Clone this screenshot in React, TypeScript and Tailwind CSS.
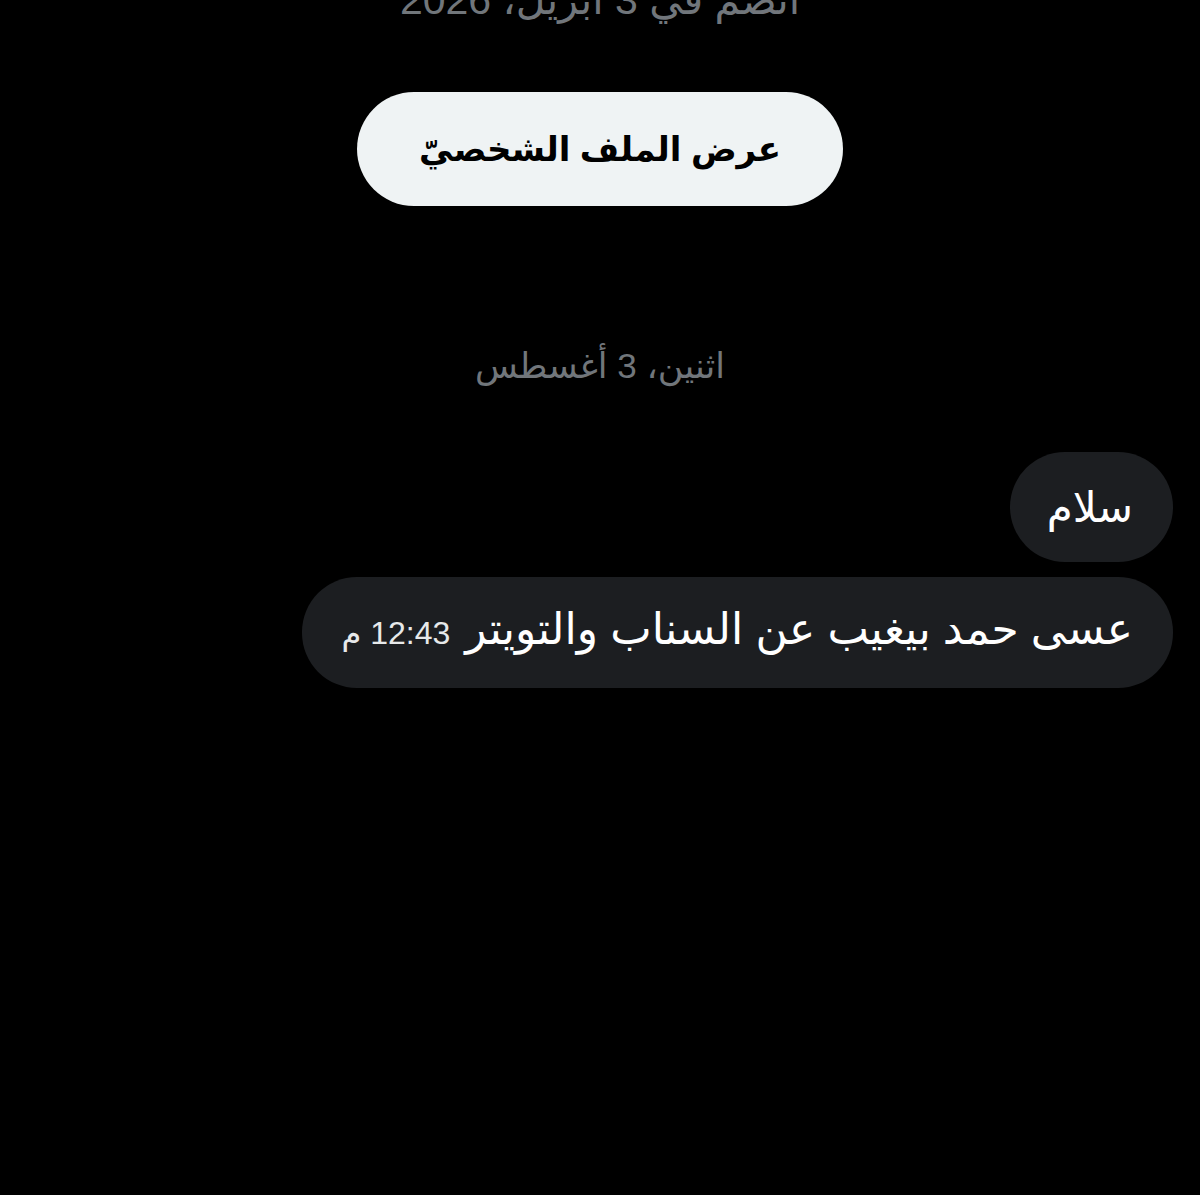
export default function App() {
  return (
    <div
      dir="rtl"
      className="w-[1200px] h-[1195px] overflow-hidden bg-black flex flex-col"
      style={{ fontFamily: '"Liberation Sans", "DejaVu Sans", sans-serif' }}
    >
      {/* تاريخ الانضمام (مقصوص من الأعلى) */}
      <div className="mt-[-25px] h-[50px] flex justify-center items-center text-[41px] leading-[50px] text-[#71767b]">
        انضم في 3 أبريل، 2026
      </div>

      <div className="mt-[67px] flex justify-center">
        <button className="w-[486px] h-[114px] rounded-full bg-[#eff3f4] text-black text-[34px] font-bold">
          عرض الملف الشخصيّ
        </button>
      </div>

      <div className="mt-[138px] flex justify-center text-[35px] leading-[44px] text-[#71767b]">
        اثنين، 3 أغسطس
      </div>

      {/* الرسائل */}
      <div className="mt-[64px] flex flex-col items-start gap-[15px] pr-[27px]">
        <div className="h-[110px] pr-[40px] pl-[37px] rounded-[55px] bg-[#1c1e21] flex items-center text-white text-[42px]">
          سلام
        </div>
        <div className="h-[111px] px-[40px] rounded-[55px] bg-[#1c1e21] flex items-baseline pt-[22px] gap-[15px]">
          <span className="text-white text-[44px] leading-[60px]">عسى حمد بيغيب عن السناب والتويتر</span>
          <span className="text-[#e7e9ea] text-[32px] leading-[40px]">12:43 م</span>
        </div>
      </div>
    </div>
  );
}
